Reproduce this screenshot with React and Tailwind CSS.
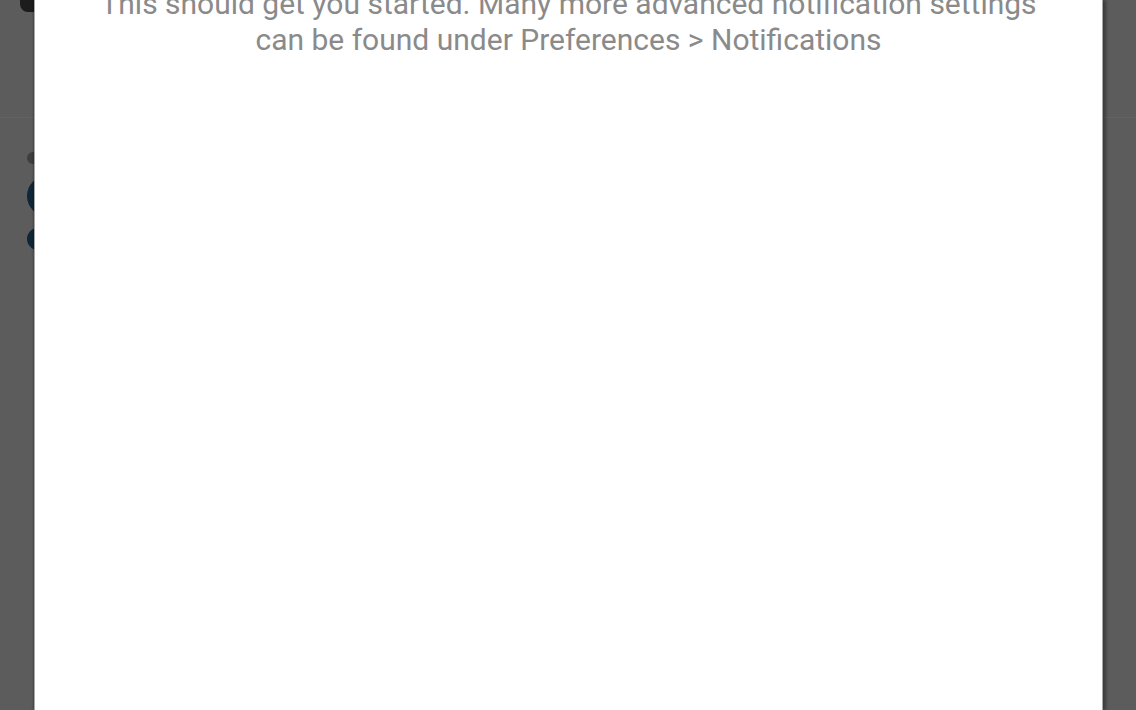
export default function App() {
  return (
    <div
      className="relative w-[1136px] h-[710px] overflow-hidden bg-[#5c5c5c]"
      style={{ fontFamily: "Roboto, 'Noto Sans', sans-serif" }}
    >
      {/* dimmed app content behind the dialog */}
      <div className="flex flex-col h-full">
        <div className="h-[118px] border-b border-[#636363] flex px-[20px]">
          <div className="w-[40px] h-[16px] -mt-[4px] rounded-b-[8px] bg-[#1c1c1c]" />
        </div>
        <div className="flex flex-col gap-[12px] pl-[27px] pt-[34px]">
          <div className="w-[12px] h-[12px] rounded-full bg-[#3e3e3e]" />
          <div className="w-[40px] h-[40px] rounded-full bg-[#0d2638]" />
          <div className="w-[40px] h-[22px] rounded-full bg-[#0d2638]" />
        </div>
      </div>

      {/* dialog */}
      <div className="absolute top-0 bottom-0 left-[34px] w-[1069px] bg-white border-x border-[#a8a8a8] shadow-[3px_0_3px_rgba(0,0,0,0.35),-1px_0_2px_rgba(0,0,0,0.25)]">
        <p className="-mt-[14px] px-[30px] text-center text-[30px] leading-[36px] text-[#8a8a8a]">
          This should get you started. Many more advanced notification settings
          <br />
          can be found under Preferences &gt; Notifications
        </p>
      </div>
    </div>
  );
}
